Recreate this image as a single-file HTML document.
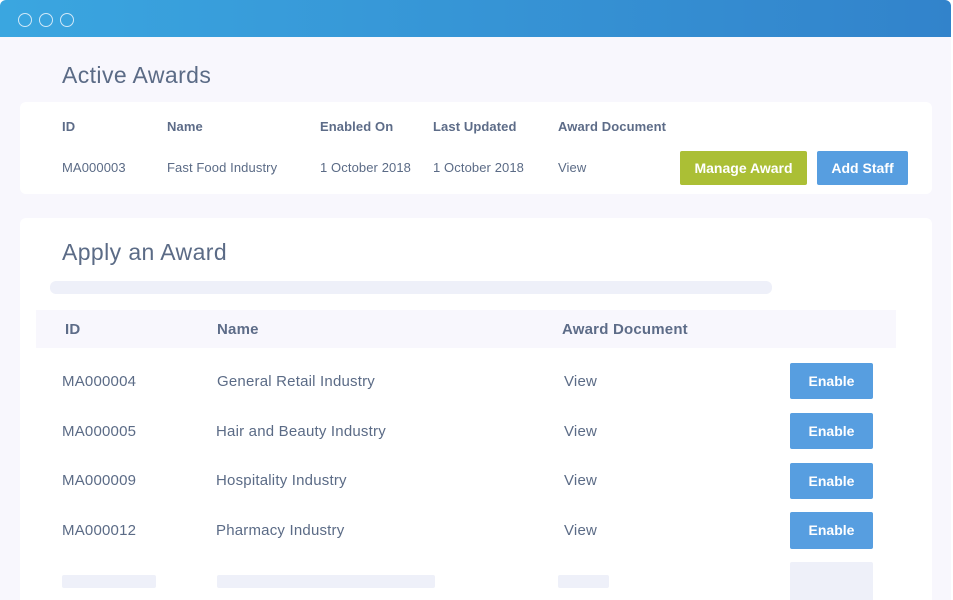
<!DOCTYPE html>
<html><head><style>
*{margin:0;padding:0;box-sizing:border-box}
body{width:953px;height:596px;overflow:hidden;background:#fff;font-family:"Liberation Sans",sans-serif;color:#5b6b86;position:relative}
.win{position:absolute;left:0;top:0;width:951px;height:600px;background:#f8f7fd;border-radius:6px 6px 0 0;overflow:hidden}
.bar{height:37px;background:linear-gradient(90deg,#3aa6e0,#3283cb)}
.dot{position:absolute;top:13px;width:14px;height:14px;border:1.3px solid #cfe8f8;border-radius:50%}
.card{position:absolute;left:20px;width:912px;background:#fff;border-radius:6px}
.t{position:absolute;font-size:13px;white-space:nowrap;letter-spacing:0.1px}
.h{font-weight:bold;color:#5d6c88}
.big{font-size:15px;letter-spacing:0.2px}
.btn{position:absolute;color:#fff;font-weight:bold;font-size:14px;text-align:center;border-radius:2px}
.ph{position:absolute;background:#eef0f9;border-radius:2px}
</style></head><body>
<div class="win">
<div class="bar"></div>
<div class="dot" style="left:18px"></div><div class="dot" style="left:39px"></div><div class="dot" style="left:60px"></div>
<div class="t" style="left:62px;top:62px;font-size:23px;letter-spacing:0.4px">Active Awards</div>
<div class="card" style="top:102px;height:92px"></div>
<div class="t h" style="left:62px;top:119px">ID</div>
<div class="t h" style="left:167px;top:119px">Name</div>
<div class="t h" style="left:320px;top:119px">Enabled On</div>
<div class="t h" style="left:433px;top:119px">Last Updated</div>
<div class="t h" style="left:558px;top:119px">Award Document</div>
<div class="t" style="left:62px;top:160px">MA000003</div>
<div class="t" style="left:167px;top:160px">Fast Food Industry</div>
<div class="t" style="left:320px;top:160px">1 October 2018</div>
<div class="t" style="left:433px;top:160px">1 October 2018</div>
<div class="t" style="left:558px;top:160px">View</div>
<div class="btn" style="left:680px;top:151px;width:127px;height:34px;line-height:34px;background:#abbf35">Manage Award</div>
<div class="btn" style="left:817px;top:151px;width:91px;height:34px;line-height:34px;background:#579ee0">Add Staff</div>

<div class="card" style="top:218px;height:400px"></div>
<div class="t" style="left:62px;top:239px;font-size:23px;letter-spacing:0.4px">Apply an Award</div>
<div class="ph" style="left:50px;top:281px;width:722px;height:13px;border-radius:6px"></div>
<div style="position:absolute;left:36px;top:310px;width:860px;height:38px;background:#f8f7fd"></div>
<div class="t h big" style="left:65px;top:321px">ID</div>
<div class="t h big" style="left:217px;top:321px">Name</div>
<div class="t h big" style="left:562px;top:321px">Award Document</div>

<div class="t big" style="left:62px;top:373px">MA000004</div><div class="t big" style="left:217px;top:373px">General Retail Industry</div><div class="t big" style="left:564px;top:373px">View</div>
<div class="btn" style="left:790px;top:363px;width:83px;height:36px;line-height:36px;background:#579ee0">Enable</div>
<div class="t big" style="left:62px;top:423px">MA000005</div><div class="t big" style="left:216px;top:423px">Hair and Beauty Industry</div><div class="t big" style="left:564px;top:423px">View</div>
<div class="btn" style="left:790px;top:413px;width:83px;height:36px;line-height:36px;background:#579ee0">Enable</div>
<div class="t big" style="left:62px;top:472px">MA000009</div><div class="t big" style="left:216px;top:472px">Hospitality Industry</div><div class="t big" style="left:564px;top:472px">View</div>
<div class="btn" style="left:790px;top:463px;width:83px;height:36px;line-height:36px;background:#579ee0">Enable</div>
<div class="t big" style="left:62px;top:522px">MA000012</div><div class="t big" style="left:216px;top:522px">Pharmacy Industry</div><div class="t big" style="left:564px;top:522px">View</div>
<div class="btn" style="left:790px;top:512px;width:83px;height:37px;line-height:37px;background:#579ee0">Enable</div>

<div class="ph" style="left:62px;top:575px;width:94px;height:13px"></div>
<div class="ph" style="left:217px;top:575px;width:218px;height:13px"></div>
<div class="ph" style="left:558px;top:575px;width:51px;height:13px"></div>
<div class="ph" style="left:790px;top:562px;width:83px;height:40px"></div>
</div>
</body></html>
